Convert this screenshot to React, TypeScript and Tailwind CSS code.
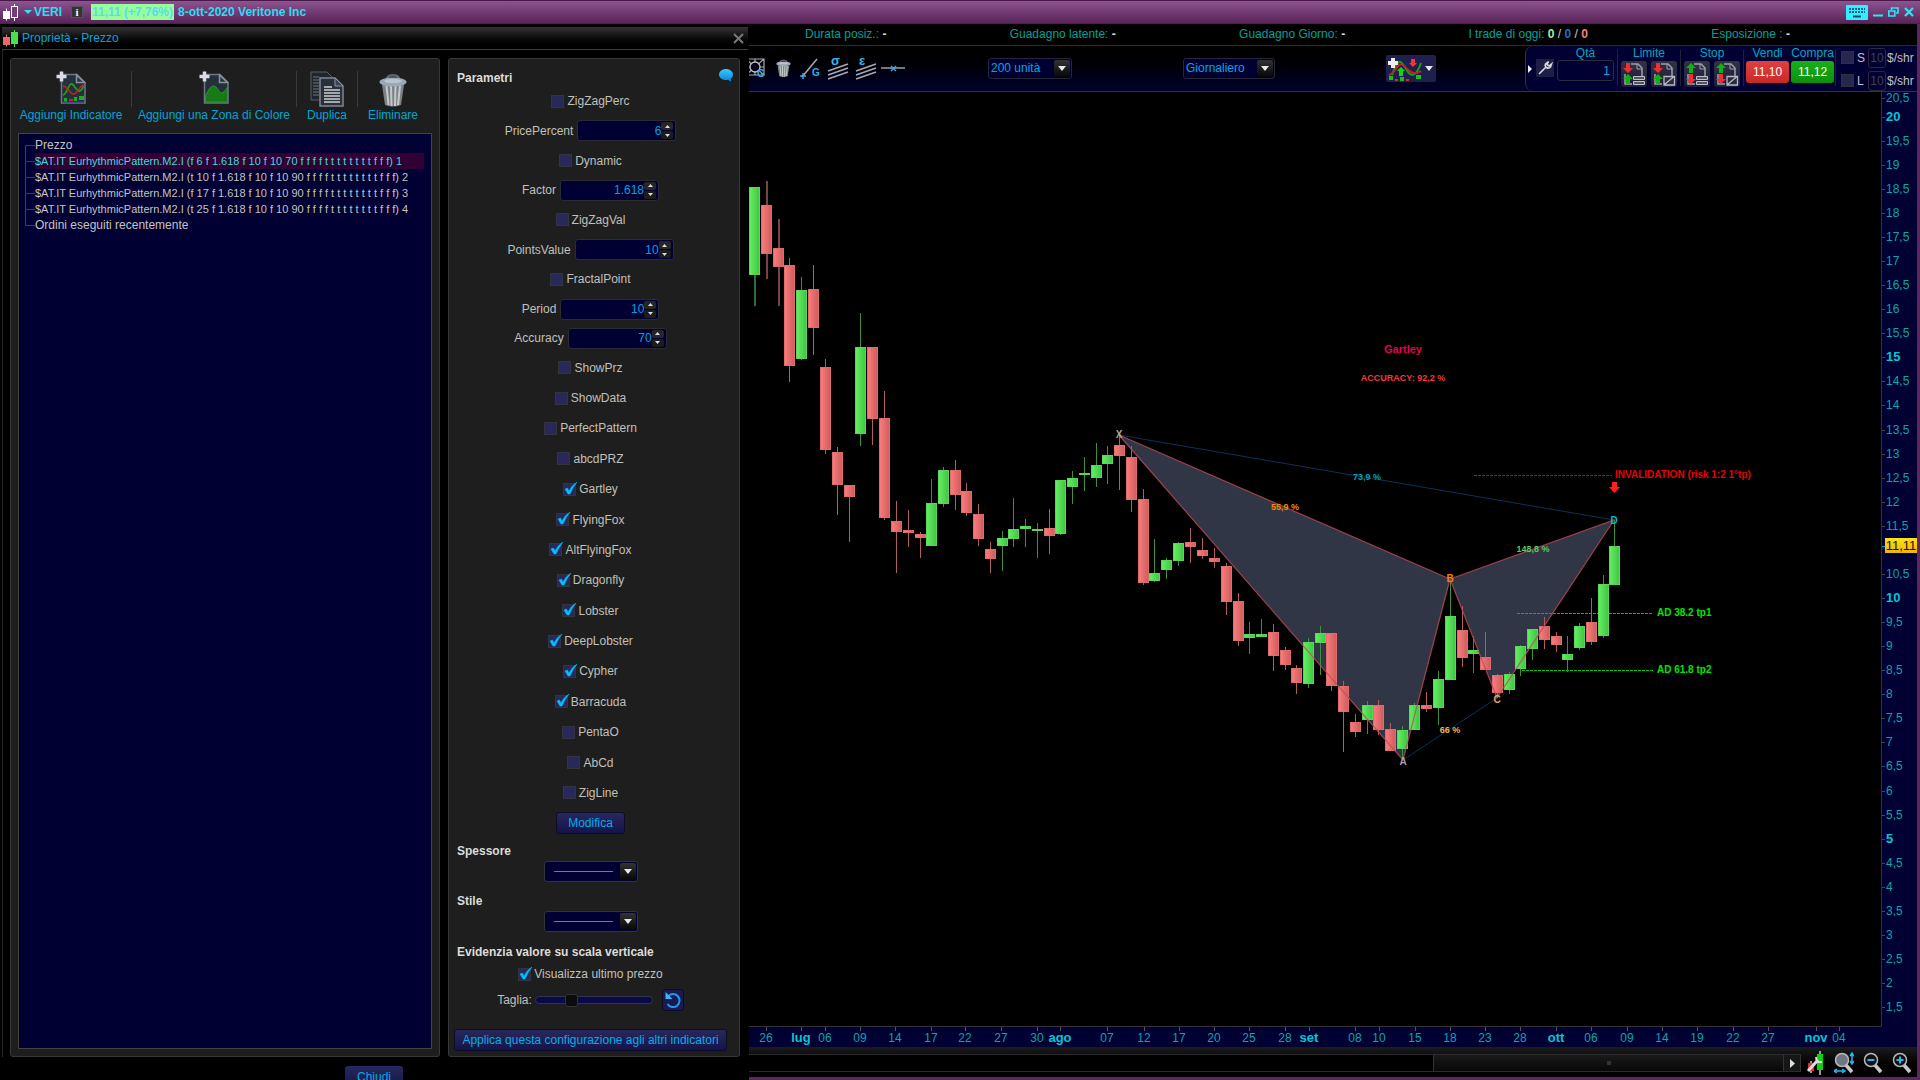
import React from "react";

type Candle = ["g" | "r", number, number, number, number, number];

/* direction, centre x, high, body top, body bottom, low */
const candles: Candle[] = [
  ["g", 754, 187, 187, 275, 306], ["r", 766, 181, 205, 254, 279], ["r", 778, 219, 248, 267, 306],
  ["r", 789, 258, 265, 366, 382], ["g", 801, 277, 290, 359, 360], ["r", 813, 265, 289, 328, 355],
  ["r", 825, 359, 367, 450, 454], ["r", 837, 447, 452, 485, 515], ["r", 849, 485, 485, 497, 542],
  ["g", 860, 313, 347, 434, 446], ["r", 872, 347, 347, 419, 445], ["r", 884, 391, 418, 518, 520],
  ["r", 896, 501, 521, 532, 573], ["r", 908, 510, 530, 533, 547], ["r", 920, 532, 534, 538, 558],
  ["g", 931, 479, 503, 546, 546], ["g", 943, 467, 470, 504, 507], ["r", 955, 460, 470, 495, 510],
  ["r", 966, 483, 491, 513, 516], ["r", 978, 504, 514, 539, 546], ["r", 990, 542, 549, 559, 573],
  ["g", 1002, 531, 538, 546, 571], ["g", 1013, 498, 529, 539, 547], ["g", 1025, 519, 526, 529, 547],
  ["g", 1037, 523, 529, 531, 558], ["r", 1049, 509, 528, 536, 554], ["g", 1060, 480, 480, 534, 535],
  ["g", 1072, 471, 478, 487, 504], ["g", 1084, 457, 473, 474, 491], ["g", 1096, 443, 465, 478, 487],
  ["g", 1107, 446, 455, 464, 484], ["r", 1119, 435, 445, 456, 490], ["r", 1131, 446, 457, 500, 512],
  ["r", 1143, 489, 499, 583, 585], ["g", 1154, 539, 573, 581, 582], ["g", 1166, 558, 560, 570, 579],
  ["g", 1178, 542, 543, 561, 566], ["r", 1190, 528, 542, 547, 563], ["r", 1202, 538, 550, 556, 559],
  ["r", 1214, 548, 558, 562, 568], ["r", 1226, 563, 566, 602, 615], ["r", 1238, 593, 601, 641, 646],
  ["g", 1249, 622, 634, 638, 654], ["g", 1261, 619, 634, 637, 637], ["r", 1273, 624, 632, 656, 671],
  ["r", 1285, 647, 650, 665, 670], ["r", 1296, 665, 668, 683, 694], ["g", 1308, 638, 642, 684, 688],
  ["g", 1320, 626, 633, 643, 675], ["r", 1331, 633, 633, 686, 691], ["r", 1343, 681, 686, 712, 752],
  ["r", 1355, 714, 722, 732, 737], ["g", 1367, 701, 705, 720, 734], ["r", 1378, 700, 705, 730, 735],
  ["r", 1390, 723, 729, 751, 751], ["g", 1402, 726, 730, 749, 760], ["g", 1414, 703, 705, 730, 730],
  ["r", 1426, 692, 705, 709, 712], ["g", 1438, 671, 679, 708, 725], ["g", 1450, 582, 616, 680, 680],
  ["r", 1462, 606, 630, 658, 667], ["g", 1473, 636, 650, 654, 673], ["r", 1485, 632, 657, 670, 670],
  ["r", 1497, 674, 675, 693, 698], ["g", 1509, 672, 674, 690, 694], ["g", 1520, 645, 646, 669, 676],
  ["g", 1532, 629, 629, 649, 660], ["r", 1544, 617, 626, 640, 649], ["r", 1556, 632, 636, 645, 652],
  ["g", 1567, 636, 654, 660, 672], ["g", 1579, 623, 626, 648, 650], ["r", 1591, 598, 622, 642, 645],
  ["g", 1603, 575, 584, 636, 638], ["g", 1614, 520, 546, 585, 585],
];

const dates: [string, number][] = [
  ["26", 766], ["lug", 801], ["06", 825], ["09", 860], ["14", 895], ["17", 931], ["22", 965], ["27", 1001],
  ["30", 1037], ["ago", 1060], ["07", 1107], ["12", 1144], ["17", 1179], ["20", 1214], ["25", 1249],
  ["28", 1285], ["set", 1309], ["08", 1355], ["10", 1379], ["15", 1415], ["18", 1450], ["23", 1485],
  ["28", 1520], ["ott", 1556], ["06", 1591], ["09", 1627], ["14", 1662], ["19", 1697], ["22", 1733],
  ["27", 1768], ["nov", 1816], ["04", 1839],
];

const prices = Array.from({ length: 39 }, (_, i) => 20.5 - i * 0.5).filter((p) => p !== 11);
const priceY = (p: number) => (p === 20.5 ? 98 : Math.round(598 + (10 - p) * 48.13));

function Chart() {
  return (
    <svg viewBox="749 92 1168 955" className="block h-full w-full" role="img" aria-label="Grafico Veritone Inc" fontFamily="'Liberation Sans', Arial, sans-serif">
      <defs>
        <linearGradient id="up"><stop offset="0" stopColor="#63f063" /><stop offset="1" stopColor="#42c442" /></linearGradient>
        <linearGradient id="down"><stop offset="0" stopColor="#fb7d7d" /><stop offset="1" stopColor="#cf5c5c" /></linearGradient>
        <linearGradient id="tag" x2="0" y2="1"><stop offset="0" stopColor="#ffe11a" /><stop offset="1" stopColor="#eeb600" /></linearGradient>
      </defs>
      <rect x="749" y="92" width="1168" height="955" fill="#000" />
      <g fill="#313646">
        <path d="M1119 435L1403 760L1450 579Z" />
        <path d="M1450 579L1497 698L1614 520Z" />
      </g>
      <g fill="none" strokeWidth="1">
        <path d="M1119 435L1614 520M1403 760L1497 698" stroke="#0a3355" />
        <path d="M1474 475.500H1612" stroke="#cc0a0a" strokeDasharray="3 1" />
        <path d="M1517 613.500H1653M1522 670.500H1653" stroke="#00c000" strokeDasharray="3 1" />
      </g>
      {candles.map(([dir, x, hi, top, bottom, lo], i) => {
        const up = dir === "g";
        return (
          <g key={i}>
            <rect x={x} y={hi} width={i < 3 ? 2 : 1} height={lo - hi} fill={up ? (i < 3 ? "#326e32" : "#3f8f3f") : i < 3 ? "#784343" : "#b05f5f"} />
            <rect x={x - 4.5} y={top + 0.5} width="10" height={Math.max(bottom - top - 1, 1)} fill={up ? "url(#up)" : "url(#down)"} stroke={up ? "#5ad65a" : "#e06c6c"} />
          </g>
        );
      })}
      <path d="M1119 435L1450 579L1403 760ZM1450 579L1614 520L1497 698Z" fill="none" stroke="#c04a58" strokeOpacity="0.8" strokeWidth="1.2" />
      <g fontSize="9" fontWeight="700" textAnchor="middle">
        <text x="1367" y="480" fill="#00a2bd">73,9 %</text>
        <text x="1285" y="510" fill="#f58a00">55,9 %</text>
        <text x="1533" y="552" fill="#5cc85c">148,8 %</text>
        <text x="1450" y="733" fill="#e8b850">66 %</text>
        <text x="1403" y="381" fill="#f23a3a">ACCURACY: 92,2 %</text>
      </g>
      <g fontSize="10" fontWeight="700" textAnchor="middle">
        <text x="1119" y="438" fill="#a8a8a0">X</text>
        <text x="1450" y="582" fill="#f58000">B</text>
        <text x="1497" y="703" fill="#e8a850">C</text>
        <text x="1403" y="765" fill="#a0a4ac">A</text>
        <text x="1614" y="524" fill="#14b0dc">D</text>
        <text x="1403" y="353" fontSize="11" fill="#e60050">Gartley</text>
      </g>
      <g fontSize="10" fontWeight="700">
        <text x="1615" y="478" fill="#e80000">INVALIDATION (risk 1:2 1°tp)</text>
        <text x="1657" y="616" fill="#00e600">AD 38.2 tp1</text>
        <text x="1657" y="673" fill="#00e600">AD 61.8 tp2</text>
      </g>
      <path d="M1612 482h5v5h3l-5.500 6l-5.500-6h3z" fill="#ff1e1e" />

      <rect x="1882" y="92" width="35" height="935" fill="#000033" />
      <rect x="749" y="1027" width="1168" height="20" fill="#000033" />
      <path d="M749 1026.500H1881.500V92" fill="none" stroke="#333" />
      {prices.map((p) => (
        <g key={p}>
          <path d={`M1882 ${priceY(p) + 0.5}h3`} stroke="#445" />
          <text x="1886" y={priceY(p) + 4} fontSize={p % 5 === 0 ? 13 : 12} fontWeight={p % 5 === 0 ? 700 : 400} fill={p % 5 === 0 ? "#00c8d4" : "#08a6ac"}>
            {String(p).replace(".", ",")}
          </text>
        </g>
      ))}
      <path d="M1882 546.500h3" stroke="#00a0d0" />
      <rect x="1885" y="538" width="32" height="15" fill="url(#tag)" />
      <text x="1901" y="550" fontSize="13" textAnchor="middle" fill="#111">11,11</text>
      {dates.map(([d, x], i) => {
        const month = /[a-z]/.test(d);
        return (
          <g key={i}>
            <path d={`M${x + 0.5} 1027v4`} stroke="#555" />
            <text x={x} y="1042" fontSize={month ? 13 : 12} fontWeight={month ? 700 : 400} textAnchor="middle" fill={month ? "#00c8d4" : "#08a6ac"}>{d}</text>
          </g>
        );
      })}
    </svg>
  );
}

function Candlesticks({ left, right }: { left: string; right: string }) {
  return (
    <svg width="18" height="17" viewBox="0 0 18 17" className="shrink-0" aria-hidden="true">
      <path d="M4.500 4.500v12" stroke={left} />
      <rect x="1" y="7" width="7" height="8" fill={left} />
      <path d="M12.500 0v17" stroke={right} />
      <rect x="9.500" y="2.500" width="6" height="11" fill={right === "#fff" ? "#6f4071" : right} stroke={right} />
    </svg>
  );
}

function Page({ zone }: { zone?: boolean }) {
  return (
    <svg width="30" height="34" viewBox="0 0 30 34" aria-hidden="true">
      <path d="M5.500 3.500h15.500l8 8v20.500h-23.500z" fill="#26303a" stroke="#6d7784" strokeWidth="1.500" />
      <path d="M20.500 4v7.500h8z" fill="#2b333d" stroke="#8892a0" strokeWidth="1.500" />
      {zone ? (
        <path d="M6.500 31v-6c3-6 5-10 8-10c4 0 5 7 8 7c2 0 4-3 6-6v15z" fill="#177a17" stroke="#23a023" />
      ) : (
        <>
          <path d="M7 24c4 0 6-13 9-11s5 8 8 7s3-5 4-6" fill="none" stroke="#1ea51e" strokeWidth="1.600" />
          <path d="M7 15c5 0 7 9 11 8s5-8 10-9" fill="none" stroke="#c12222" strokeWidth="1.600" />
          <path d="M8 29h3M18 28h3M23 27h5" stroke="#18b018" strokeWidth="4" />
          <path d="M13 29h4" stroke="#d02020" strokeWidth="2" />
          <path d="M7 31h21" stroke="#2a2ac0" />
        </>
      )}
      <path d="M5.500 .5v10M.5 5.500h10" stroke="#dcdce8" strokeWidth="3.500" />
    </svg>
  );
}

function Copy() {
  return (
    <svg width="34" height="36" viewBox="0 0 34 36" aria-hidden="true">
      <path d="M1 1h16l7 7v21h-23z" fill="#20252b" stroke="#59616b" />
      <path d="M3 6h6M3 9h6M3 12h6M3 15h6M3 18h6M3 21h6M3 24h6" stroke="#70757c" />
      <path d="M10 7h15l8 8v20h-23z" fill="#28313a" stroke="#7d8794" strokeWidth="1.500" />
      <path d="M25 7v8h8z" fill="#39434e" stroke="#8a94a2" />
      <path d="M14 16h8M14 19h16M14 22h16M14 25h16M14 28h16M14 31h16" stroke="#d0d0d4" strokeWidth="1.300" />
    </svg>
  );
}

function Trash({ size }: { size: number }) {
  return (
    <svg width={size} height={(size * 34) / 28} viewBox="0 0 28 34" aria-hidden="true">
      <path d="M8 6c0-5 12-5 12 0" fill="none" stroke="#60646c" strokeWidth="2.500" />
      <path d="M3 12h22l-3 20q-8 3-16 0z" fill="#7b8186" />
      <path d="M7.500 13l2 19M12 13l.5 20M16.500 13l-.5 20M21 13l-2 19" stroke="#c5c9cc" strokeWidth="2" />
      <ellipse cx="14" cy="9" rx="13.500" ry="4.500" fill="#9aa7b6" />
      <ellipse cx="14" cy="8" rx="9" ry="2" fill="#b9c4d0" />
    </svg>
  );
}

function Caret() {
  return <svg width="8" height="5" viewBox="0 0 8 5" aria-hidden="true"><path d="M0 0h8l-4 5z" fill="#e8e8e8" /></svg>;
}

function CaretBox() {
  return (
    <span className="pointer-events-none absolute top-[2px] right-[2px] bottom-[2px] flex w-4 items-center justify-center rounded-[2px] bg-linear-to-b from-[#333] to-[#080808]">
      <Caret />
    </span>
  );
}

function Tick({ id, label, checked }: { id: string; label: string; checked?: boolean }) {
  return (
    <span className="flex items-center gap-[3px]">
      <span className="relative flex size-[13px]">
        <input id={id} type="checkbox" defaultChecked={checked} className="peer size-[13px] appearance-none border border-[#34343f] bg-[#28285a]" />
        <svg width="14" height="13" viewBox="0 0 14 13" aria-hidden="true" className="pointer-events-none absolute -top-px left-px hidden peer-checked:block">
          <path d="M1 7l2.500-1l1.500 3q3-6 8-9q-4 5-7 12h-2z" fill="#00c0ff" stroke="#00c0ff" strokeWidth="0.500" />
        </svg>
      </span>
      <label htmlFor={id}>{label}</label>
    </span>
  );
}

function Spinner({ id, label, value }: { id: string; label: string; value: string }) {
  return (
    <span className="flex items-center gap-1">
      <label htmlFor={id}>{label}</label>
      <span className="flex h-[21px] w-[99px] items-center rounded-[3px] border border-[#2b2b33] bg-[#000033] pr-[2px]">
        <input id={id} defaultValue={value} className="w-full min-w-0 bg-transparent text-right text-[#00a0e0]" />
        <span className="flex shrink-0 flex-col gap-px">
          <button aria-label={`Aumenta ${label}`} className="flex h-2 w-3 items-center justify-center rounded-[2px] bg-[#262626]">
            <svg width="5" height="3" viewBox="0 0 5 3"><path d="M0 3h5l-2.500-3z" fill="#ddd" /></svg>
          </button>
          <button aria-label={`Diminuisci ${label}`} className="flex h-2 w-3 items-center justify-center rounded-[2px] bg-[#1c1c1c]">
            <svg width="5" height="3" viewBox="0 0 5 3"><path d="M0 0h5l-2.500 3z" fill="#ddd" /></svg>
          </button>
        </span>
      </span>
    </span>
  );
}

function LineSelect({ id }: { id: string }) {
  return (
    <span className="relative">
      <select id={id} className="block h-[21px] w-[94px] appearance-none rounded-[3px] border border-[#33333a] bg-[#000033]">
        <option aria-label="Linea continua"></option>
      </select>
      <span className="pointer-events-none absolute top-[10px] left-[10px] h-px w-[59px] bg-[#00a8e0]" />
      <CaretBox />
    </span>
  );
}

const params: { label: string; value?: string; on?: boolean }[] = [
  { label: "ZigZagPerc" }, { label: "PricePercent", value: "6" }, { label: "Dynamic" }, { label: "Factor", value: "1.618" },
  { label: "ZigZagVal" }, { label: "PointsValue", value: "10" }, { label: "FractalPoint" }, { label: "Period", value: "10" },
  { label: "Accuracy", value: "70" }, { label: "ShowPrz" }, { label: "ShowData" }, { label: "PerfectPattern" }, { label: "abcdPRZ" },
  { label: "Gartley", on: true }, { label: "FlyingFox", on: true }, { label: "AltFlyingFox", on: true }, { label: "Dragonfly", on: true },
  { label: "Lobster", on: true }, { label: "DeepLobster", on: true }, { label: "Cypher", on: true }, { label: "Barracuda", on: true },
  { label: "PentaO" }, { label: "AbCd" }, { label: "ZigLine" },
];

const tree = [
  "Prezzo",
  "$AT.IT EurhythmicPattern.M2.I (f 6 f 1.618 f 10 f 10 70 f f f f t t t t t t t t f f f) 1",
  "$AT.IT EurhythmicPattern.M2.I (t 10 f 1.618 f 10 f 10 90 f f f f t t t t t t t t f f f) 2",
  "$AT.IT EurhythmicPattern.M2.I (f 17 f 1.618 f 10 f 10 90 f f f f t t t t t t t t f f f) 3",
  "$AT.IT EurhythmicPattern.M2.I (t 25 f 1.618 f 10 f 10 90 f f f f t t t t t t t t f f f) 4",
  "Ordini eseguiti recentemente",
];

function ToolButton({ label, className, children }: { label: string; className: string; children: React.ReactNode }) {
  return (
    <button className={`flex h-[51px] flex-col items-center justify-between whitespace-nowrap text-[#00a5d5] ${className}`}>
      {children}
      <span className="leading-[14px]">{label}</span>
    </button>
  );
}

const Divider = () => <span className="h-9 w-px bg-[#3a3a3a]" />;

function Dialog() {
  return (
    <section aria-label="Proprietà - Prezzo" className="flex w-[748px] shrink-0 flex-col bg-black pt-[3px]">
      <header className="ml-[2px] flex h-[23px] items-center border-b border-[#3c3c3c] bg-linear-to-b from-[#333] to-black pr-1 text-[#00a5d5]">
        <Candlesticks left="#e86a6a" right="#4fdc4f" />
        <h1 className="ml-[2px]">Proprietà - Prezzo</h1>
        <button aria-label="Chiudi finestra" className="ml-auto">
          <svg width="11" height="11" viewBox="0 0 11 11"><path d="M1 1l9 9M10 1l-9 9" stroke="#777" strokeWidth="2" /></svg>
        </button>
      </header>
      <div className="ml-[2px] flex min-h-0 flex-1 gap-2 border-l border-[#262626] pt-2 pr-2 pl-[7px]">
        <div className="flex w-[430px] shrink-0 flex-col rounded-[3px] border border-[#383838] bg-[#1e1e1e] p-[7px]">
          <div className="flex h-[67px] items-start pt-[5px]">
            <ToolButton label="Aggiungi Indicatore" className="w-[106px]"><Page /></ToolButton>
            <span className="ml-[7px] flex"><Divider /></span>
            <ToolButton label="Aggiungi una Zona di Colore" className="ml-1 w-[156px]"><Page zone /></ToolButton>
            <span className="ml-[4px] flex"><Divider /></span>
            <ToolButton label="Duplica" className="w-[60px]"><Copy /></ToolButton>
            <Divider />
            <ToolButton label="Eliminare" className="w-[70px] pt-[2px]"><Trash size={28} /></ToolButton>
          </div>
          <ul className="min-h-0 flex-1 overflow-hidden border border-[#44443c] bg-[#000033] pt-[3px] pl-[6px] text-[#c4c4c0]">
            {tree.map((t, i) => (
              <li key={t} className="flex h-4 items-center whitespace-nowrap">
                <svg width="10" height="16" viewBox="0 0 10 16" className="shrink-0" aria-hidden="true">
                  <path d={i === 0 ? "M.5 16V8.500H10" : i === 5 ? "M.5 0V8.500H10" : "M.5 0V16M0 8.500H10"} fill="none" stroke="#0a5070" />
                </svg>
                <button className={i === 1 ? "h-4 w-[389px] bg-[#330033] text-left text-[11px] text-[#35dce0]" : i > 1 && i < 5 ? "h-4 text-[11px]" : "h-4"}>{t}</button>
              </li>
            ))}
          </ul>
        </div>
        <div className="flex flex-1 flex-col rounded-[3px] border border-[#383838] bg-[#1e1e1e] pt-[11px] pr-[12px] pb-[5px] pl-[5px] text-[#c0c0bc]">
          <div className="flex h-[15px] items-center justify-between pl-[3px]">
            <h2 className="font-bold text-[#dcdcd8]">Parametri</h2>
            <button aria-label="Aiuto" className="mr-[-6px] -mt-1">
              <svg width="14" height="13" viewBox="0 0 14 13">
                <defs><linearGradient id="hlp" x2="0" y2="1"><stop offset="0" stopColor="#38c8ff" /><stop offset="1" stopColor="#0080e0" /></linearGradient></defs>
                <path d="M7 0C3 0 0 2.500 0 5.500S3 11 7 11q1 0 2-.3L12 13l-.3-3.300Q14 8 14 5.500C14 2.500 11 0 7 0z" fill="url(#hlp)" />
              </svg>
            </button>
          </div>
          <div className="mt-px flex min-h-0 flex-1 flex-col items-center">
            {params.map((p) =>
              p.value ? (
                <div key={p.label} className="flex h-[29px] shrink-0 items-center"><Spinner id={p.label} label={p.label} value={p.value} /></div>
              ) : (
                <div key={p.label} className="flex min-h-0 flex-1 items-center"><Tick id={p.label} label={p.label} checked={p.on} /></div>
              ),
            )}
          </div>
          <button className="mt-1 h-[22px] w-[69px] shrink-0 self-center rounded-[3px] border border-[#0c0c24] bg-linear-to-b from-[#28285c] to-[#14144a] text-[#00aee8]">Modifica</button>
          <label htmlFor="spessore" className="mt-[10px] ml-[3px] h-[15px] font-bold leading-[15px] text-[#dcdcd8]">Spessore</label>
          <span className="mt-[2px] flex justify-center"><LineSelect id="spessore" /></span>
          <label htmlFor="stile" className="mt-3 ml-[3px] h-[15px] font-bold leading-[15px] text-[#dcdcd8]">Stile</label>
          <span className="mt-[2px] flex justify-center"><LineSelect id="stile" /></span>
          <h2 className="mt-[13px] ml-[3px] h-[15px] font-bold leading-[15px] text-[#dcdcd8]">Evidenzia valore su scala verticale</h2>
          <div className="mt-[6px] flex h-4 items-center justify-center"><Tick id="ultimo" label="Visualizza ultimo prezzo" checked /></div>
          <div className="mt-[7px] flex h-[22px] items-center justify-center">
            <label htmlFor="taglia">Taglia:</label>
            <input
              id="taglia"
              type="range"
              min="0"
              max="100"
              defaultValue="28"
              className="ml-[3px] h-[8px] w-[118px] appearance-none rounded-full border border-[#333348] bg-[#0a0a4a] [&::-webkit-slider-thumb]:h-[13px] [&::-webkit-slider-thumb]:w-[13px] [&::-webkit-slider-thumb]:appearance-none [&::-webkit-slider-thumb]:rounded-[3px] [&::-webkit-slider-thumb]:border [&::-webkit-slider-thumb]:border-[#333] [&::-webkit-slider-thumb]:bg-[#0c0c0c]"
            />
            <button aria-label="Ripristina" className="ml-[9px] flex size-[22px] items-center justify-center rounded-[3px] border border-[#0c0c24] bg-[#1a1a50]">
              <svg width="18" height="18" viewBox="0 0 18 18"><path d="M4 5.500a6.500 6.500 0 1 1-.5 7.500" fill="none" stroke="#1a9cf0" strokeWidth="2" /><path d="M1.500 1v7h7z" fill="#30b8ff" /></svg>
            </button>
          </div>
          <button className="mt-[18px] h-[22px] shrink-0 rounded-[3px] border border-[#0c0c24] bg-linear-to-b from-[#28285c] to-[#14144a] whitespace-nowrap text-[#00aee8]">Applica questa configurazione agli altri indicatori</button>
        </div>
      </div>
      <footer className="flex h-[23px] shrink-0 justify-center overflow-hidden pt-[9px]">
        <button className="h-[22px] w-[58px] rounded-[3px] bg-linear-to-b from-[#28285c] to-[#14144a] text-[#00aee8]">Chiudi</button>
      </footer>
    </section>
  );
}

function OrderIcon({ stop, slash, label }: { stop?: boolean; slash?: boolean; label: string }) {
  const top = stop ? "#10b010" : "#f03030";
  const bottom = stop ? "#f03030" : "#10b010";
  return (
    <button aria-label={label} className="flex size-[26px] items-center justify-center rounded-[3px] bg-linear-to-b from-[#323244] to-[#1c1c3c]">
      <svg width="24" height="24" viewBox="0 0 24 24">
        <path d="M9 2h7l4 4v8M3 12v10h7" fill="none" stroke="#a0a0aa" strokeWidth="1.500" />
        <path d="M15 2v5h5" fill="none" stroke="#a0a0aa" />
        {stop ? <path d="M6 1l5 5h-3v5h-4v-5h-3z" fill={top} /> : <path d="M4 1h4v5h3l-5 5l-5-5h3z" fill={top} />}
        {stop ? <path d="M4 12h4v5h3l-5 5l-5-5h3z" fill={bottom} /> : <path d="M6 12l5 5h-3v5h-4v-5h-3z" fill={bottom} />}
        {slash ? (
          <path d="M12 14.500h10.500v8.500h-10.500zM12.500 22.500l9.500-8" fill="#2a2a44" stroke="#b8b8c0" strokeWidth="1.300" />
        ) : (
          <path d="M11.500 14.500h11v3h-11zM11.500 19.500h11v3h-11z" fill="#55555f" stroke="#c0c0c8" />
        )}
      </svg>
    </button>
  );
}

function Group({ title, children }: { title: string; children: React.ReactNode }) {
  return (
    <div className="flex flex-col items-center">
      <span className="h-[15px] leading-[15px] text-[#00a8bc]">{title}</span>
      <div className="flex gap-1">{children}</div>
    </div>
  );
}

const Rule = () => <span className="mt-1 h-9 w-px bg-[#222230]" />;

function ShareRow({ id, label }: { id: string; label: string }) {
  return (
    <div className="flex h-[21px] items-center">
      <input type="checkbox" id={id} className="size-[13px] appearance-none border border-[#30303a] bg-[#26264e]" />
      <label htmlFor={id} className="ml-[3px] w-[9px]">{label}</label>
      <input aria-label={`${label} importo`} defaultValue="10" className="ml-[2px] h-5 w-[18px] rounded-[3px] border border-[#2a2a3a] bg-transparent text-center text-[#40404f]" />
      <span className="ml-px">$/shr</span>
    </div>
  );
}

function Toolbar() {
  return (
    <div className="flex h-[46px] shrink-0 items-stretch border-b border-[#333] bg-linear-to-b from-black to-[#000030]">
      <div className="flex flex-1 items-center pb-px">
        <button aria-label="Griglia di Gann">
          <svg width="17" height="22" viewBox="0 0 17 22">
            <path d="M-3 2h18v16h-18zM-3 2l18 16M15 2l-18 16M6 2v16M-3 10h18" fill="none" stroke="#a8a8b0" strokeWidth="1.200" />
            <circle cx="6" cy="10" r="5" fill="#000018" stroke="#c0c0c8" strokeWidth="1.300" />
            <text x="8" y="20" fontSize="10" fontWeight="700" fill="#30b0e8">G</text>
          </svg>
        </button>
        <button aria-label="Elimina oggetti" className="ml-[10px]"><Trash size={15} /></button>
        <button aria-label="Linea di Gann" className="ml-[9px]">
          <svg width="22" height="22" viewBox="0 0 22 22">
            <path d="M2 20L17 2" stroke="#a8a8b0" strokeWidth="1.500" /><path d="M0 19h6M3 16v6" stroke="#30b0e8" strokeWidth="1.500" />
            <text x="12" y="19" fontSize="10" fontWeight="700" fill="#30b0e8">G</text>
          </svg>
        </button>
        <button aria-label="Deviazione standard" className="ml-[5px]">
          <svg width="22" height="24" viewBox="0 0 22 24">
            <path d="M1 15L21 8M1 19L21 12M1 23L21 16" stroke="#a8a8b0" strokeWidth="1.500" /><text x="4" y="9" fontSize="13" fontWeight="700" fill="#30b8f0">σ</text>
          </svg>
        </button>
        <button aria-label="Errore standard" className="ml-[6px]">
          <svg width="22" height="24" viewBox="0 0 22 24">
            <path d="M1 15L21 8M1 19L21 12M1 23L21 16" stroke="#a8a8b0" strokeWidth="1.500" /><text x="4" y="9" fontSize="13" fontWeight="700" fill="#30b8f0">ε</text>
          </svg>
        </button>
        <button aria-label="Linea orizzontale" className="ml-1">
          <svg width="24" height="22" viewBox="0 0 24 22"><path d="M0 11h24" stroke="#b8b8b8" strokeWidth="1.300" /><path d="M10 9l5 5M15 9l-5 5" stroke="#30b0e8" strokeWidth="1.300" /></svg>
        </button>
        <span className="relative ml-[83px]">
          <select aria-label="Unità" className="block h-[21px] w-[84px] appearance-none rounded-[3px] border border-[#26263a] bg-[#000030] pl-[2px] text-[#00a5e0]">
            <option>200 unità</option>
          </select>
          <CaretBox />
        </span>
        <span className="relative ml-[111px]">
          <select aria-label="Intervallo" className="block h-[21px] w-[92px] appearance-none rounded-[3px] border border-[#26263a] bg-[#000030] pl-[2px] text-[#00a5e0]">
            <option>Giornaliero</option>
          </select>
          <CaretBox />
        </span>
        <button aria-label="Aggiungi indicatore" className="ml-[111px] flex h-[27px] items-center gap-[3px] rounded-[2px] bg-[#20204e] pr-[3px]">
          <svg width="36" height="27" viewBox="0 0 36 27">
            <path d="M6 20C12 2 15 5 20 14S30 22 35 8" fill="none" stroke="#16a016" strokeWidth="2" />
            <path d="M3 20c7-2 9-14 14-10s9 12 18 6" fill="none" stroke="#c02424" strokeWidth="2" />
            <path d="M25 4h4v4h2l-4 4l-4-4h2z" fill="#ff3030" /><path d="M15 12l4 4h-2v5h-4v-5h-2z" fill="#18d018" />
            <path d="M3 23h4M14 24h4M30 22h5" stroke="#18c018" strokeWidth="4" /><path d="M9 25h3M20 25h3" stroke="#e02828" strokeWidth="2" />
            <path d="M7 3v10M2 8h10" stroke="#eee" strokeWidth="4" />
          </svg>
          <Caret />
        </button>
      </div>
      <div className="flex w-[392px] shrink-0 rounded-l-[8px] border-l border-[#333] bg-[#000033] text-[#c0c0c8]">
        <button aria-label="Comprimi" className="ml-[2px]"><svg width="4" height="8" viewBox="0 0 4 8"><path d="M0 0l4 4l-4 4z" fill="#eee" /></svg></button>
        <button aria-label="Impostazioni" className="mt-[13px] ml-[4px] flex h-[18px] w-[18px] items-center justify-center bg-[#1e1e48]">
          <svg width="16" height="16" viewBox="0 0 16 16"><path d="M2 14l7-7M8.500 4.500L11 2M8.500 4q-1 2 1 3.500q2 1.500 4-.5l1-3l-2.500 2l-2-1.500l1.500-3z" fill="none" stroke="#d8d8d8" strokeWidth="1.600" /></svg>
        </button>
        <div className="ml-[3px] flex flex-col items-center">
          <label htmlFor="qta" className="h-[14px] leading-[15px] text-[#00a8bc]">Qtà</label>
          <input id="qta" defaultValue="1" className="h-[21px] w-[57px] rounded-[3px] border border-[#2c2c40] bg-transparent pr-[3px] text-right text-[#00a5e0]" />
        </div>
        <span className="ml-[3px] flex gap-[3px]">
          <Rule />
          <Group title="Limite"><OrderIcon label="Limite fisso" /><OrderIcon slash label="Limite obliquo" /></Group>
          <Rule />
          <Group title="Stop"><OrderIcon stop label="Stop fisso" /><OrderIcon stop slash label="Stop obliquo" /></Group>
          <Rule />
        </span>
        <div className="ml-[2px] flex flex-col items-center">
          <span className="h-[15px] leading-[15px] text-[#00a8bc]">Vendi</span>
          <button className="h-[22px] w-[43px] rounded-[3px] bg-linear-to-b from-[#e04040] to-[#c82828] text-white">11,10</button>
        </div>
        <div className="ml-[2px] flex flex-col items-center">
          <span className="h-[15px] leading-[15px] text-[#00a8bc]">Compra</span>
          <button className="h-[22px] w-[43px] rounded-[3px] bg-linear-to-b from-[#18b018] to-[#0c900c] text-white">11,12</button>
        </div>
        <span className="ml-px flex"><Rule /></span>
        <div className="ml-[5px] flex flex-col gap-[2px] pt-px">
          <ShareRow id="shr-s" label="S" />
          <ShareRow id="shr-l" label="L" />
        </div>
      </div>
    </div>
  );
}

function Magnifier({ kind }: { kind: "fit" | "out" | "in" }) {
  return (
    <svg width="20" height="22" viewBox="0 0 20 22" aria-hidden="true">
      <path d="M11 12l7 8" stroke="#c8c8c8" strokeWidth="3.500" />
      <circle cx="8" cy="8" r="6.500" fill={kind === "fit" ? "#6d7784" : "#111"} stroke="#b8b8b8" strokeWidth="1.500" />
      {kind === "fit" && <path d="M18 2v9M16 4l2-3l2 3M16 9l2 3l2-3M1 19h9M3 17l-3 2l3 2M8 17l3 2l-3 2" fill="none" stroke="#28b4f0" strokeWidth="1.500" />}
      {kind !== "fit" && <path d="M4.500 8h7" stroke="#28b4f0" strokeWidth="2" />}
      {kind === "in" && <path d="M8 4.500v7" stroke="#28b4f0" strokeWidth="2" />}
    </svg>
  );
}

function BottomBar() {
  return (
    <div className="flex h-[30px] shrink-0 items-center bg-linear-to-b from-[#1c1c1c] to-black pt-[2px]">
      <div className="flex h-[18px] flex-1 justify-end border-y border-[#2c2c2c] bg-black">
        <span className="flex w-1/3 items-center justify-center border-x border-[#333] bg-linear-to-b from-[#1a1a1a] to-[#080808]">
          <span className="size-1 bg-[#333]" />
        </span>
        <button aria-label="Scorri a destra" className="flex w-[17px] items-center justify-center border-r border-[#333] bg-[#161616]">
          <svg width="5" height="9" viewBox="0 0 5 9"><path d="M0 0l5 4.500l-5 4.500z" fill="#ddd" /></svg>
        </button>
      </div>
      <div className="flex items-center gap-[9px] pr-[5px] pl-[6px]">
        <button aria-label="Impostazioni prezzo">
          <svg width="18" height="24" viewBox="0 0 18 24">
            <path d="M4 10v12M13 0v24" stroke="#ccc" strokeWidth="1.500" /><rect x="1" y="12" width="6" height="8" fill="#e03030" /><rect x="10" y="3" width="6" height="16" fill="#10d010" />
            <path d="M1 20L11 9" stroke="#ddd" strokeWidth="3" /><path d="M9 6l1 5l5 0" fill="none" stroke="#ddd" strokeWidth="2" />
          </svg>
        </button>
        <button aria-label="Adatta zoom"><Magnifier kind="fit" /></button>
        <button aria-label="Riduci zoom"><Magnifier kind="out" /></button>
        <button aria-label="Aumenta zoom"><Magnifier kind="in" /></button>
      </div>
    </div>
  );
}

export default function App() {
  return (
    <div className="flex h-screen flex-col overflow-hidden bg-black font-['Liberation_Sans',Arial,sans-serif] text-[12px] leading-[16px]">
      <header className="flex h-6 shrink-0 items-center border-t border-b border-t-[#4a174a] border-b-[#333] bg-linear-to-b from-[#8c5490] to-[#5a245a] pr-[6px] pl-[2px] font-bold text-[#2fdcf4]">
        <Candlesticks left="#fff" right="#fff" />
        <button className="ml-[4px] flex items-center gap-[2px]">
          <svg width="8" height="4" viewBox="0 0 8 4" aria-hidden="true"><path d="M0 0h8l-4 4z" fill="#2fe4f4" /></svg>
          VERI
        </button>
        <button aria-label="Informazioni" className="ml-[9px] flex h-3 w-3 items-center justify-center border border-[#555] bg-[#333] font-['Liberation_Serif',serif] text-[11px] leading-none text-white">i</button>
        <span className="ml-[8px] h-4 w-[83px] bg-[#96ff9c] text-center whitespace-nowrap text-[#58dcec]">11,11 (+7,76%)</span>
        <span className="ml-1">8-ott-2020 Veritone Inc</span>
        <div className="ml-auto flex items-center gap-[5px]">
          <button aria-label="Tastiera">
            <svg width="22" height="15" viewBox="0 0 22 15"><rect width="22" height="15" rx="1" fill="#2ff0ff" /><path d="M3 4h16M3 7h16" stroke="#1a5a80" strokeWidth="2" strokeDasharray="2 1" /><path d="M7 11.500h8" stroke="#1a4a70" strokeWidth="2" /></svg>
          </button>
          <button aria-label="Riduci a icona"><svg width="10" height="10" viewBox="0 0 10 10"><path d="M0 8.500h10" stroke="#2fe4f4" strokeWidth="2" /></svg></button>
          <button aria-label="Ripristina finestra"><svg width="11" height="10" viewBox="0 0 11 10"><path d="M3.500 3V1h6.500v5h-2M.8 4h6v5h-6z" fill="none" stroke="#2fe4f4" strokeWidth="1.600" /></svg></button>
          <button aria-label="Chiudi"><svg width="10" height="10" viewBox="0 0 10 10"><path d="M1 1l8 8M9 1l-8 8" stroke="#2fe4f4" strokeWidth="2.200" /></svg></button>
        </div>
      </header>
      <div className="flex min-h-0 flex-1">
        <Dialog />
        <main className="ml-px flex min-w-0 flex-1 flex-col border-r-[3px] border-b-[3px] border-[#5e265e]">
          <div className="flex h-[22px] shrink-0 justify-between border-b border-[#2c2c2c] pr-[127px] pl-[56px] leading-[20px] text-[#00a098]">
            <span>Durata posiz.: <b className="text-[#ddd]">-</b></span>
            <span>Guadagno latente: <b className="text-[#ddd]">-</b></span>
            <span>Guadagno Giorno: <b className="text-[#ddd]">-</b></span>
            <span>I trade di oggi: <b className="text-[#a0f0a0]">0</b> <span className="text-[#ccc]">/</span> <b className="text-[#1a70c0]">0</b> <span className="text-[#ccc]">/</span> <b className="text-[#f08080]">0</b></span>
            <span>Esposizione : <b className="text-[#ddd]">-</b></span>
          </div>
          <Toolbar />
          <div className="min-h-0 flex-1"><Chart /></div>
          <BottomBar />
        </main>
      </div>
    </div>
  );
}
